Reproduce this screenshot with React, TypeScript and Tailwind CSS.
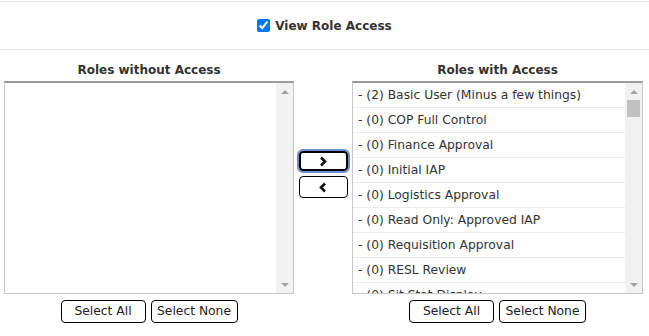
import React from 'react';

const withAccess = [
  '- (2) Basic User (Minus a few things)',
  '- (0) COP Full Control',
  '- (0) Finance Approval',
  '- (0) Initial IAP',
  '- (0) Logistics Approval',
  '- (0) Read Only: Approved IAP',
  '- (0) Requisition Approval',
  '- (0) RESL Review',
  '- (0) Sit Stat Display',
];

function ScrollBar({ thumb }: { thumb?: boolean }) {
  return (
    <div className="w-[17px] bg-[#f1f1f1] flex flex-col items-center">
      <div className="h-[17px] flex items-center justify-center">
        <span className="w-0 h-0 border-x-[4px] border-x-transparent border-b-[4px] border-b-[#a3a3a3]" />
      </div>
      <div className="flex-1 w-full px-[2px]">
        {thumb && <div className="h-[17px] bg-[#c1c1c1]" />}
      </div>
      <div className="h-[17px] flex items-center justify-center">
        <span className="w-0 h-0 border-x-[4px] border-x-transparent border-t-[4px] border-t-[#a3a3a3]" />
      </div>
    </div>
  );
}

function Listbox({ items }: { items: string[] }) {
  return (
    <div className="flex h-[213px] border border-[#c8c8c8] border-t-[#9a9a9a] border-t-2 bg-white overflow-hidden">
      <div className="flex-1 overflow-hidden">
        {items.map((it) => (
          <div key={it} className="h-[25px] leading-[25px] pl-[5px] border-b border-[#ebebeb] text-[#333] whitespace-nowrap">
            {it}
          </div>
        ))}
      </div>
      <ScrollBar thumb={items.length > 0} />
    </div>
  );
}

function SelectButtons() {
  return (
    <div className="flex justify-center gap-[5px] mt-[6px]">
      <button className="w-[85px] h-[23px] border border-black rounded-[4px] bg-white text-[#222]">Select All</button>
      <button className="w-[87px] h-[23px] border border-black rounded-[4px] bg-white text-[#222]">Select None</button>
    </div>
  );
}

function Chevron({ dir }: { dir: 'left' | 'right' }) {
  return (
    <svg width="10" height="11" viewBox="0 0 10 11">
      <path
        d={dir === 'right' ? 'M3 1.5 L7 5.5 L3 9.5' : 'M7 1.5 L3 5.5 L7 9.5'}
        fill="none"
        stroke="#111"
        strokeWidth="2.6"
      />
    </svg>
  );
}

export default function App() {
  return (
    <div className="w-[649px] h-[336px] bg-white text-[12.3px] text-[#333]" style={{ fontFamily: '"DejaVu Sans", Verdana, sans-serif' }}>
      <div className="h-px" />
      <div className="h-[49px] border-y border-[#eaeaea] flex items-center justify-center gap-[5px]">
        <input type="checkbox" defaultChecked className="w-[13px] h-[13px] accent-[#0075ff]" />
        <span className="font-bold text-[12px] text-[#333]">View Role Access</span>
      </div>
      <div className="flex px-[4px] pt-[9px]">
        <div className="w-[290px]">
          <div className="h-[22px] pt-[2px] text-center font-bold text-[12px]">Roles without Access</div>
          <Listbox items={[]} />
          <SelectButtons />
        </div>
        <div className="w-[58px] flex flex-col items-center gap-[5px] pt-[92px]">
          <button className="w-[49px] h-[20px] border-2 border-black rounded-[4px] bg-white flex items-center justify-center outline outline-2 outline-[#6f8fc8]">
            <Chevron dir="right" />
          </button>
          <button className="w-[49px] h-[22px] border border-black rounded-[4px] bg-white flex items-center justify-center">
            <Chevron dir="left" />
          </button>
        </div>
        <div className="w-[291px]">
          <div className="h-[22px] pt-[2px] text-center font-bold text-[12px]">Roles with Access</div>
          <Listbox items={withAccess} />
          <SelectButtons />
        </div>
      </div>
    </div>
  );
}
